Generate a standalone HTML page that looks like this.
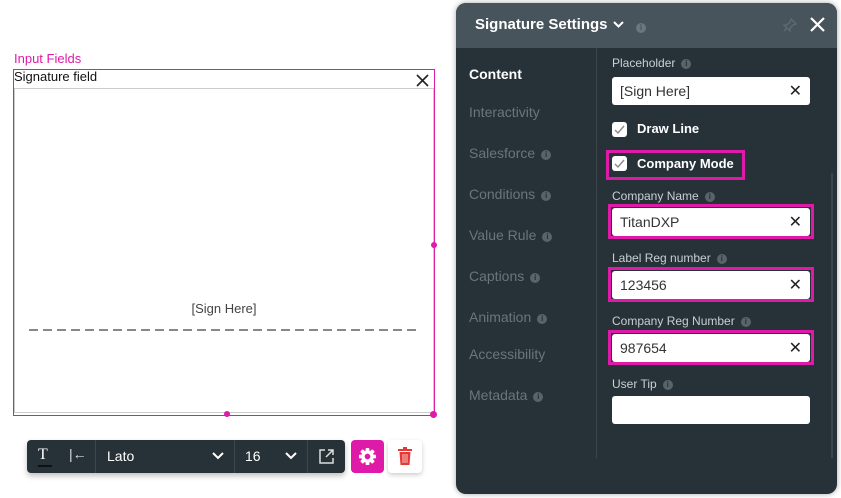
<!DOCTYPE html>
<html><head><meta charset="utf-8"><style>
*{box-sizing:border-box;margin:0;padding:0}
body{width:841px;height:498px;background:#fff;font-family:"Liberation Sans",sans-serif;position:relative;overflow:hidden}
.a{position:absolute}
.nav{position:absolute;left:13px;font-size:14px;color:#6b757b}
.info{display:inline-block;width:10px;height:10px;border-radius:50%;background:#59636a;color:#263238;font-size:8px;line-height:10px;text-align:center;font-weight:bold;vertical-align:1px;margin-left:6px}
.lbl{position:absolute;left:156px;font-size:12px;color:#c9cfd3}
.inp{position:absolute;left:156px;width:198px;height:28px;background:#fff;border-radius:3px;font-size:14px;color:#333;padding:6px 8px}
.inp .x{position:absolute;right:8px;top:4px;font-size:16px;color:#222}
.hl{position:absolute;border:3px solid #e01aa8}
.cb{position:absolute;width:15px;height:15px;background:#fff;border-radius:3px;left:156px}
.cb svg{position:absolute;left:2px;top:2px}
</style></head><body>
<div class="a" style="left:14px;top:51px;font-size:13px;color:#e01aa8">Input Fields</div>
<div class="a" style="left:14px;top:88px;width:420px;height:325px;border:1px solid #ccc"></div>
<div class="a" style="left:13px;top:69px;width:422px;height:347px;border:1px solid #e01aa8"></div>
<div class="a" style="left:14px;top:69px;font-size:13px;color:#111">Signature field</div>
<svg class="a" style="left:416px;top:74px" width="13" height="13"><path d="M1 1L12 12M12 1L1 12" stroke="#222" stroke-width="1.6"/></svg>
<div class="a" style="left:0;width:448px;top:301px;text-align:center;font-size:13px;color:#444">[Sign Here]</div>
<div class="a" style="left:29px;top:329px;width:389px;height:2px;background:repeating-linear-gradient(90deg,#888 0 9px,transparent 9px 14px)"></div>
<div class="a" style="left:431px;top:242px;width:6px;height:6px;border-radius:50%;background:#e01aa8"></div>
<div class="a" style="left:224px;top:411px;width:6px;height:6px;border-radius:50%;background:#e01aa8"></div>
<div class="a" style="left:430px;top:411px;width:7px;height:7px;border-radius:50%;background:#e01aa8"></div>

<div class="a" style="left:27px;top:440px;width:318px;height:33px;background:#263238;border-radius:4px;box-shadow:0 3px 6px rgba(0,0,0,.25)"></div>
<div class="a" style="left:38px;top:446px;color:#fff;font-size:16px;font-family:'Liberation Serif',serif">T</div>
<div class="a" style="left:38px;top:465px;width:14px;height:2px;background:#111"></div>
<div class="a" style="left:69px;top:446px;color:#ddd;font-size:14px">|←</div>
<div class="a" style="left:95px;top:440px;width:1px;height:33px;background:#3d474d"></div>
<div class="a" style="left:107px;top:448px;color:#fff;font-size:14px">Lato</div>
<svg class="a" style="left:212px;top:452px" width="12" height="8"><path d="M1 1L6 6L11 1" stroke="#fff" stroke-width="2" fill="none"/></svg>
<div class="a" style="left:234px;top:440px;width:1px;height:33px;background:#3d474d"></div>
<div class="a" style="left:245px;top:448px;color:#fff;font-size:14px">16</div>
<svg class="a" style="left:285px;top:452px" width="12" height="8"><path d="M1 1L6 6L11 1" stroke="#fff" stroke-width="2" fill="none"/></svg>
<div class="a" style="left:307px;top:440px;width:1px;height:33px;background:#3d474d"></div>
<svg class="a" style="left:319px;top:449px" width="15" height="15"><path d="M6 1H1V14H14V9M9 1H14V6M14 1L7 8" stroke="#ddd" stroke-width="1.5" fill="none"/></svg>
<div class="a" style="left:351px;top:440px;width:33px;height:33px;background:#e01aa8;border-radius:4px"></div>
<svg class="a" style="left:358px;top:447px" width="19" height="19" viewBox="0 0 20 20"><g fill="#fff"><circle cx="10" cy="10" r="6.5"/><rect x="8" y="1" width="4" height="18" rx="1"/><rect x="1" y="8" width="18" height="4" rx="1"/><rect x="8" y="1" width="4" height="18" rx="1" transform="rotate(45 10 10)"/><rect x="8" y="1" width="4" height="18" rx="1" transform="rotate(-45 10 10)"/></g><circle cx="10" cy="10" r="3" fill="#e01aa8"/></svg>
<div class="a" style="left:388px;top:440px;width:34px;height:33px;background:#fff;border-radius:4px;box-shadow:0 2px 5px rgba(0,0,0,.2)"></div>
<svg class="a" style="left:398px;top:447px" width="14" height="18"><rect x="0" y="2" width="14" height="2" fill="#e53935"/><rect x="5" y="0" width="4" height="2" fill="#e53935"/><path d="M1.5 5H12.5L11.5 18H2.5Z" fill="#e53935"/><path d="M5 7V16M7 7V16M9 7V16" stroke="#fff" stroke-width=".7"/></svg>

<div class="a" style="left:456px;top:3px;width:381px;height:491px;background:#263238;border-radius:10px;box-shadow:0 0 6px rgba(0,0,0,.35);overflow:hidden">
 <div class="a" style="left:0;top:0;width:381px;height:45px;background:#48545c"></div>
 <div class="a" style="left:19px;top:13px;color:#fff;font-size:15px;font-weight:bold">Signature Settings</div>
 <svg class="a" style="left:157px;top:18px" width="11" height="8"><path d="M1 1L5.5 5.5L10 1" stroke="#fff" stroke-width="2" fill="none"/></svg>
 <div class="a" style="left:180px;top:15px"><span class="info" style="background:#6b767d;color:#48545c;margin:0">i</span></div>
 <svg class="a" style="left:327px;top:15px" width="14" height="14"><path d="M8 1L13 6L10 7L7 10L7 13L1 7L4 7L7 4Z M4 10L1 13" stroke="#5f6a70" stroke-width="1.3" fill="none"/></svg>
 <svg class="a" style="left:354px;top:14px" width="15" height="15"><path d="M1 1L14 14M14 1L1 14" stroke="#fff" stroke-width="2.2"/></svg>
 <div class="a" style="left:140px;top:45px;width:1px;height:410px;background:#3c464c"></div>
 <div class="a" style="left:375px;top:170px;width:2px;height:285px;background:#3c464c"></div>
 <div class="nav" style="top:63px;color:#fff;font-weight:bold">Content</div>
 <div class="nav" style="top:101px">Interactivity</div>
 <div class="nav" style="top:142px">Salesforce<span class="info">i</span></div>
 <div class="nav" style="top:183px">Conditions<span class="info">i</span></div>
 <div class="nav" style="top:224px">Value Rule<span class="info">i</span></div>
 <div class="nav" style="top:265px">Captions<span class="info">i</span></div>
 <div class="nav" style="top:306px">Animation<span class="info">i</span></div>
 <div class="nav" style="top:343px">Accessibility</div>
 <div class="nav" style="top:384px">Metadata<span class="info">i</span></div>

 <div class="lbl" style="top:53px">Placeholder<span class="info">i</span></div>
 <div class="inp" style="top:74px">[Sign Here]<span class="x">✕</span></div>
 <div class="cb" style="top:119px"><svg width="11" height="11"><path d="M1 6L4 9L10 2" stroke="#888" stroke-width="1.4" fill="none"/></svg></div>
 <div class="a" style="left:181px;top:118px;color:#fff;font-size:13px;font-weight:bold">Draw Line</div>
 <div class="hl" style="left:150px;top:147px;width:139px;height:30px"></div>
 <div class="cb" style="top:153px"><svg width="11" height="11"><path d="M1 6L4 9L10 2" stroke="#888" stroke-width="1.4" fill="none"/></svg></div>
 <div class="a" style="left:181px;top:153px;color:#fff;font-size:13px;font-weight:bold">Company Mode</div>

 <div class="lbl" style="top:186px">Company Name<span class="info">i</span></div>
 <div class="hl" style="left:152px;top:201px;width:206px;height:35px"></div>
 <div class="inp" style="top:205px">TitanDXP<span class="x">✕</span></div>
 <div class="lbl" style="top:248px">Label Reg number<span class="info">i</span></div>
 <div class="hl" style="left:152px;top:264px;width:206px;height:35px"></div>
 <div class="inp" style="top:268px">123456<span class="x">✕</span></div>
 <div class="lbl" style="top:311px">Company Reg Number<span class="info">i</span></div>
 <div class="hl" style="left:152px;top:327px;width:206px;height:35px"></div>
 <div class="inp" style="top:331px">987654<span class="x">✕</span></div>
 <div class="lbl" style="top:374px">User Tip<span class="info">i</span></div>
 <div class="inp" style="top:393px"></div>
</div>
</body></html>
